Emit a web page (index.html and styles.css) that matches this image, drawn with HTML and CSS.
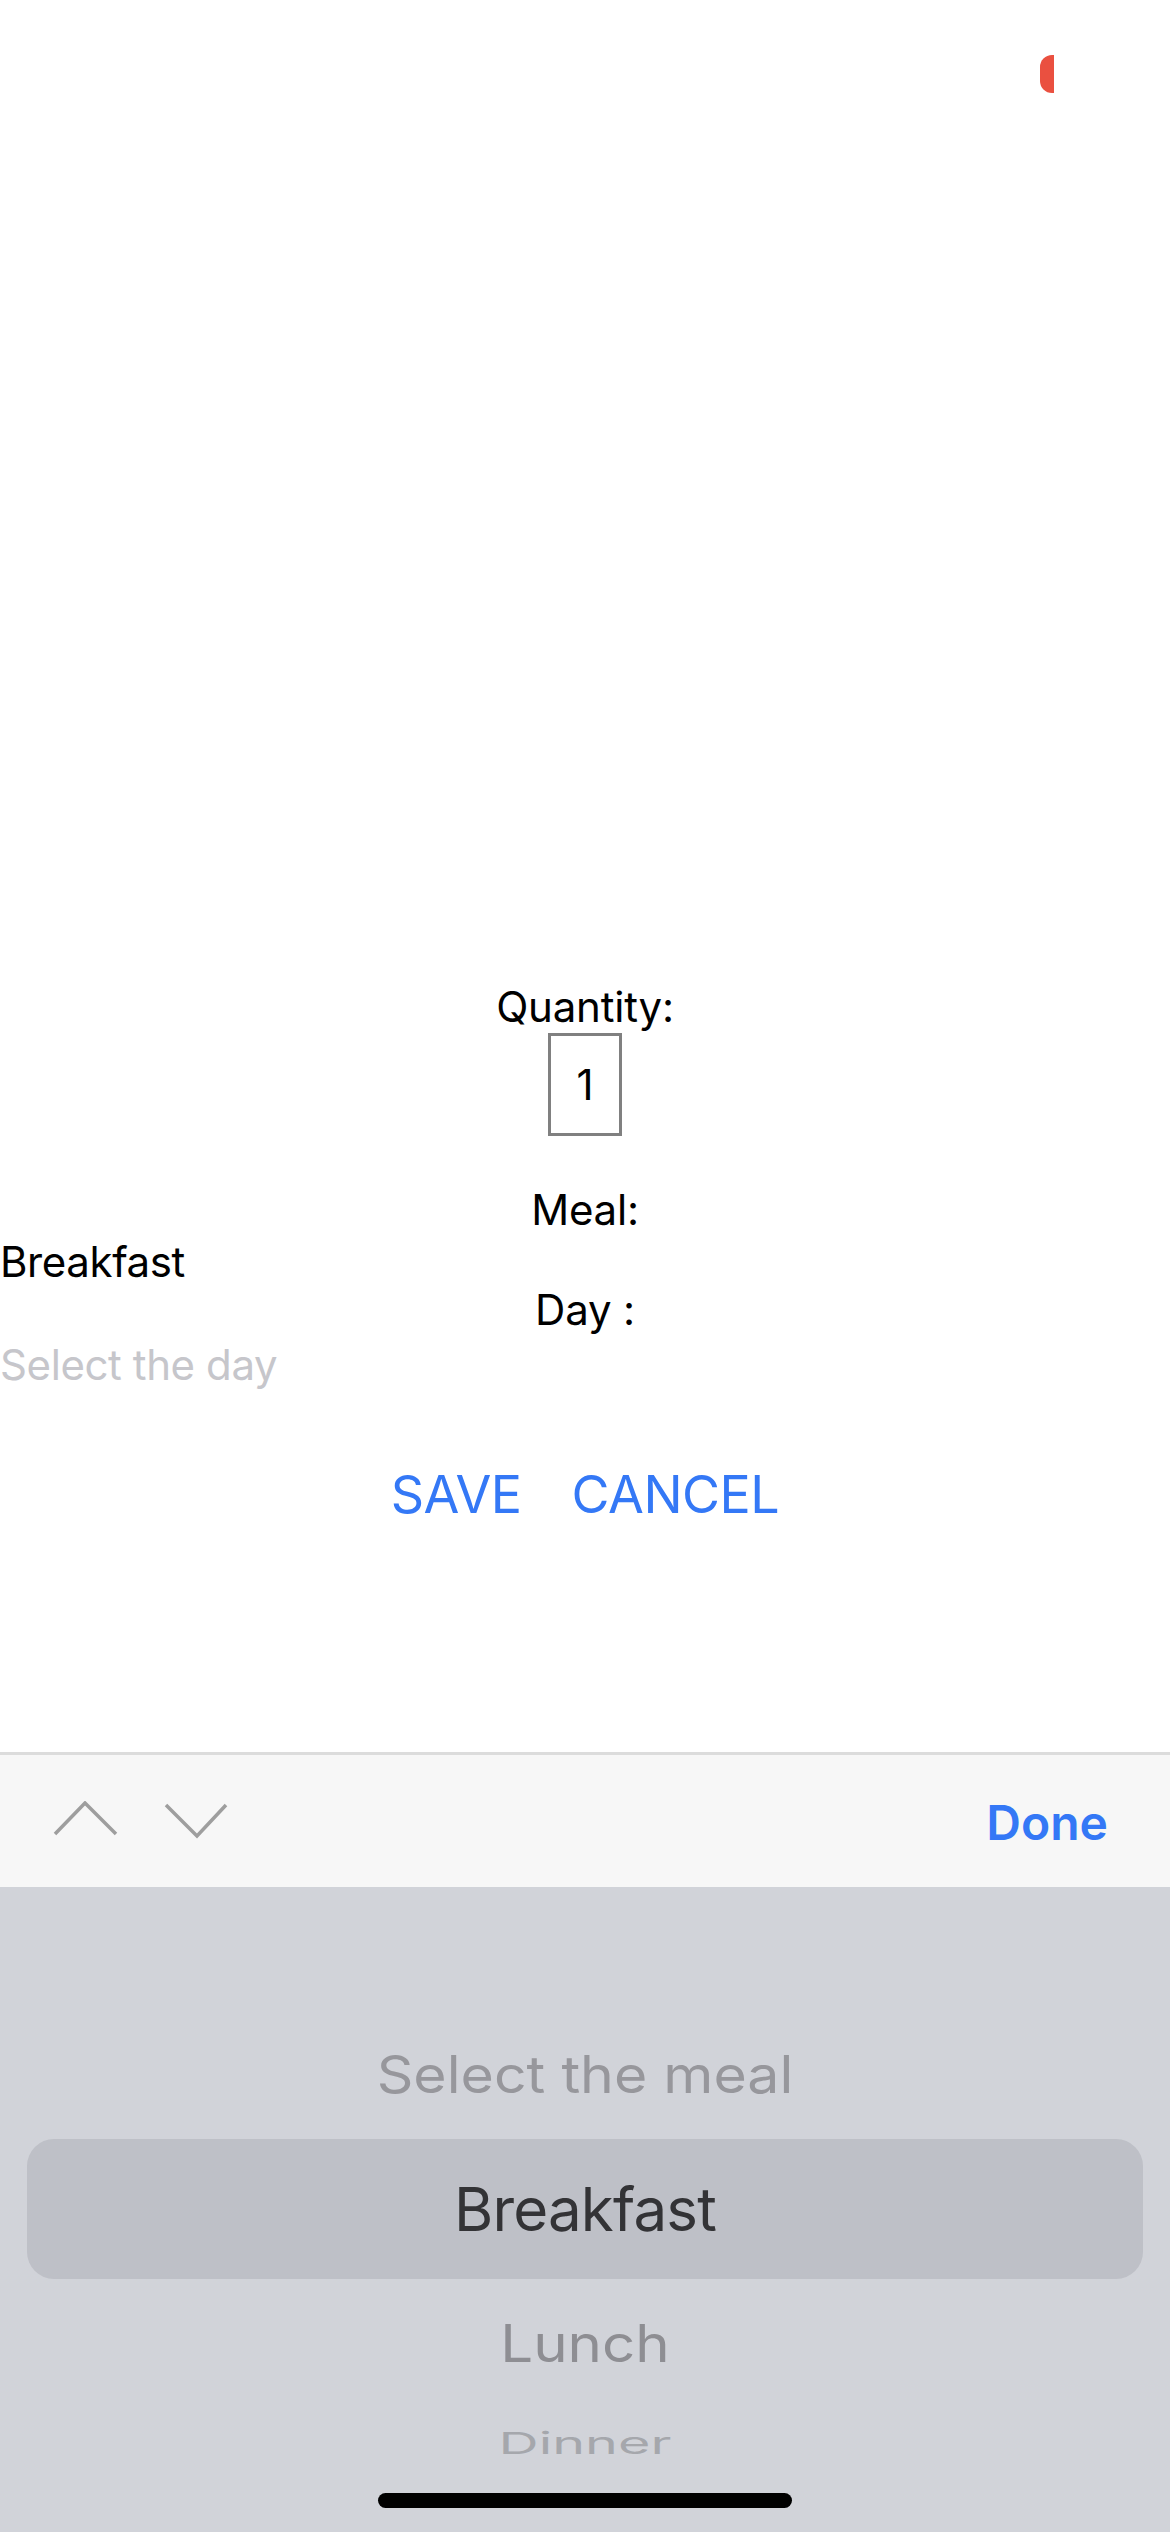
FILE: index.html
```html
<!DOCTYPE html>
<html>
<head>
<meta charset="utf-8">
<link rel="stylesheet" href="styles.css">
</head>
<body>
<div class="screen">
  <div class="rec-dot"></div>
  <main class="form">
    <div class="label">Quantity:</div>
    <div class="qty">1</div>
    <div class="label meal-label">Meal:</div>
    <div class="value">Breakfast</div>
    <div class="label day-label">Day :</div>
    <div class="value placeholder">Select the day</div>
    <div class="actions">
      <span class="btn">SAVE</span>
      <span class="btn">CANCEL</span>
    </div>
  </main>
  <div class="toolbar">
    <div class="arrows">
      <svg class="chev" width="71" height="40" viewBox="0 0 71 40"><polyline points="5,33 35,2 66,33" fill="none" stroke="#9e9e9e" stroke-width="3.5"/></svg>
      <svg class="chev" width="71" height="40" viewBox="0 0 71 40"><polyline points="5,4 36,35 65,4" fill="none" stroke="#9e9e9e" stroke-width="3.5"/></svg>
    </div>
    <span class="done">Done</span>
  </div>
  <div class="picker">
    <div class="row row-top">Select the meal</div>
    <div class="row row-selected">Breakfast</div>
    <div class="row row-next">Lunch</div>
    <div class="row row-far">Dinner</div>
    <div class="home-indicator"></div>
  </div>
</div>
</body>
</html>
```
FILE: styles.css
```css
html, body {
  margin: 0;
  padding: 0;
}
body {
  width: 1170px;
  height: 2532px;
  overflow: hidden;
  background: #ffffff;
  font-family: Inter, "Noto Sans", sans-serif;
  color: #000;
}
.screen {
  position: relative;
  width: 1170px;
  height: 2532px;
  display: flex;
  flex-direction: column;
}
.rec-dot {
  position: absolute;
  left: 1040px;
  top: 55px;
  width: 14px;
  height: 38px;
  background: #ea5040;
  border-radius: 12px 0 0 12px;
}
.form {
  flex: 1;
  display: flex;
  flex-direction: column;
  align-items: center;
  padding-top: 982px;
  box-sizing: border-box;
}
.label {
  font-size: 42px;
  line-height: 50px;
  letter-spacing: -0.2px;
}
.qty {
  margin-top: 1px;
  width: 74px;
  height: 103px;
  box-sizing: border-box;
  border: 3px solid #808080;
  display: flex;
  align-items: center;
  justify-content: center;
  font-size: 42px;
}
.meal-label {
  margin-top: 45px;
  line-height: 58px;
}
.value {
  align-self: stretch;
  font-size: 42px;
  line-height: 46px;
  text-align: left;
  letter-spacing: -0.4px;
}
.day-label {
  line-height: 50px;
}
.placeholder {
  line-height: 60px;
  color: #c6c6cb;
}
.actions {
  margin-top: 70px;
  display: flex;
  gap: 50px;
}
.btn {
  font-size: 52px;
  line-height: 60px;
  color: #3478f6;
  letter-spacing: -0.5px;
}
.toolbar {
  height: 132px;
  border-top: 3px solid #dcdcdc;
  background: #f7f7f7;
  display: flex;
  align-items: center;
  justify-content: space-between;
  padding: 0 62px 0 50px;
}
.arrows {
  display: flex;
  gap: 40px;
}
.chev {
  display: block;
}
.done {
  font-size: 48px;
  line-height: 60px;
  font-weight: 600;
  color: #3478f6;
  padding-top: 4px;
}
.picker {
  position: relative;
  height: 645px;
  background: #d1d3d9;
  padding-top: 124px;
  box-sizing: border-box;
  display: flex;
  flex-direction: column;
  align-items: center;
}
.row {
  width: 1116px;
  text-align: center;
  font-size: 52px;
}
.row-top {
  height: 128px;
  line-height: 128px;
  color: #97979c;
  transform: scaleX(1.1);
}
.row-selected {
  height: 140px;
  line-height: 140px;
  font-size: 60px;
  color: #333336;
  background: #bec0c7;
  border-radius: 27px;
  letter-spacing: -0.8px;
}
.row-next {
  height: 130px;
  line-height: 130px;
  color: #8e8e93;
  transform: scaleX(1.12);
}
.row-far {
  height: 60px;
  line-height: 60px;
  margin-top: 5px;
  color: #a5a7ac;
  transform: scale(1.07, 0.58);
}
.home-indicator {
  position: absolute;
  left: 378px;
  bottom: 24px;
  width: 414px;
  height: 15px;
  border-radius: 8px;
  background: #000;
}
```
